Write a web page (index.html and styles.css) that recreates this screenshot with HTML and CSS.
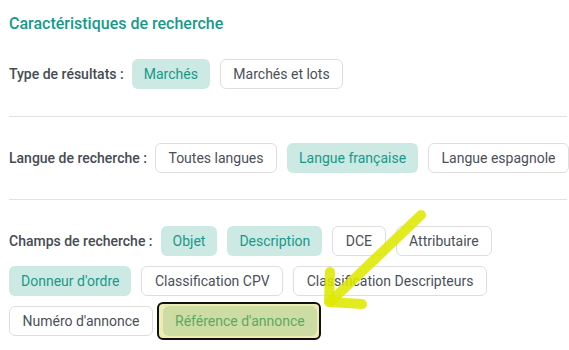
FILE: index.html
```html
<!DOCTYPE html>
<html lang="fr">
<head>
  <meta charset="UTF-8">
  <title>Caractéristiques de recherche</title>
  <link rel="stylesheet" href="styles.css">
</head>
<body>
  <div class="panel">
    <h2>Caractéristiques de recherche</h2>

    <!-- Type de résultats -->
    <div class="section first">
      <div class="chips">
        <span class="label">Type de résultats :</span>
        <span class="chip on">Marchés</span>
        <span class="chip">Marchés et lots</span>
      </div>
    </div>

    <!-- Langue -->
    <div class="section">
      <div class="chips">
        <span class="label">Langue de recherche :</span>
        <span class="chip">Toutes langues</span>
        <span class="chip on">Langue française</span>
        <span class="chip">Langue espagnole</span>
      </div>
    </div>

    <!-- Champs -->
    <div class="section last">
      <div class="chips">
        <span class="label">Champs de recherche :</span>
        <span class="chip on">Objet</span>
        <span class="chip on">Description</span>
        <span class="chip">DCE</span>
        <span class="chip">Attributaire</span>
        <span class="chip on">Donneur d'ordre</span>
        <span class="chip">Classification CPV</span>
        <span class="chip">Classification Descripteurs</span>
        <span class="chip">Numéro d'annonce</span>
        <span class="chip on marked">Référence d'annonce</span>
      </div>
    </div>

    <!-- annotation arrow -->
    <svg class="arrow" width="569" height="350" viewBox="0 0 569 350">
      <g fill="none" stroke="rgba(222,232,0,0.88)" stroke-width="10" stroke-linecap="round" stroke-linejoin="round">
        <path d="M421 215 L331 301"/>
        <path d="M330 272 L329 302 L362 304"/>
      </g>
    </svg>
  </div>
</body>
</html>
```

FILE: styles.css
```css
body {
  margin: 0;
  font-family: Roboto, 'Liberation Sans', sans-serif;
  background: #ffffff;
}

.panel {
  position: relative;
  padding: 14px 2px 0 9px;
}

h2 {
  margin: 0;
  font-size: 16px;
  line-height: 20px;
  font-weight: 500;
  color: #17998a;
}

.section {
  padding: 26px 0;
  border-bottom: 1px solid #e2e2e2;
}

.section.first {
  padding-top: 25px;
  padding-bottom: 27px;
}

.section.last {
  border-bottom: none;
}

.chips {
  display: flex;
  flex-wrap: wrap;
  align-items: center;
  gap: 10px;
  margin-right: -4px;
}

.label {
  font-size: 14px;
  font-weight: 500;
  color: #464b52;
  margin-right: -2px;
}

.chip {
  padding: 6px 12.5px;
  font-size: 14px;
  line-height: 16px;
  color: #4b5058;
  background: #ffffff;
  border: 1px solid #dedede;
  border-radius: 6px;
}

.chip.on {
  padding: 7px 12px;
  background: #cde9e4;
  border: none;
  color: #17998a;
}

.chip.marked {
  position: relative;
}

.chip.marked::after {
  content: "";
  position: absolute;
  top: -4px;
  bottom: -4px;
  left: -6px;
  right: -4px;
  border: 2px solid #111111;
  border-radius: 6px;
  background: rgba(206, 198, 40, 0.35);
}

.arrow {
  position: absolute;
  left: 0;
  top: 0;
  pointer-events: none;
}
```
